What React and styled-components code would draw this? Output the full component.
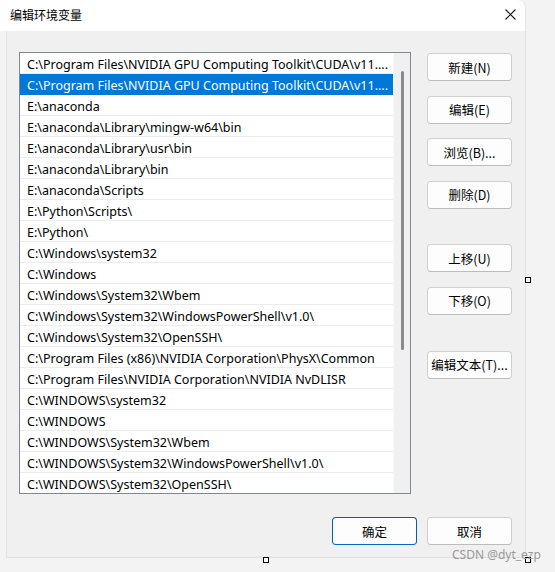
import React from 'react';
import styled, { createGlobalStyle } from 'styled-components';

const paths = [
  'C:\\Program Files\\NVIDIA GPU Computing Toolkit\\CUDA\\v11....',
  'C:\\Program Files\\NVIDIA GPU Computing Toolkit\\CUDA\\v11....',
  'E:\\anaconda',
  'E:\\anaconda\\Library\\mingw-w64\\bin',
  'E:\\anaconda\\Library\\usr\\bin',
  'E:\\anaconda\\Library\\bin',
  'E:\\anaconda\\Scripts',
  'E:\\Python\\Scripts\\',
  'E:\\Python\\',
  'C:\\Windows\\system32',
  'C:\\Windows',
  'C:\\Windows\\System32\\Wbem',
  'C:\\Windows\\System32\\WindowsPowerShell\\v1.0\\',
  'C:\\Windows\\System32\\OpenSSH\\',
  'C:\\Program Files (x86)\\NVIDIA Corporation\\PhysX\\Common',
  'C:\\Program Files\\NVIDIA Corporation\\NVIDIA NvDLISR',
  'C:\\WINDOWS\\system32',
  'C:\\WINDOWS',
  'C:\\WINDOWS\\System32\\Wbem',
  'C:\\WINDOWS\\System32\\WindowsPowerShell\\v1.0\\',
  'C:\\WINDOWS\\System32\\OpenSSH\\',
];

const sideButtons = [
  { label: '新建(N)' },
  { label: '编辑(E)' },
  { label: '浏览(B)...' },
  { label: '删除(D)' },
  { label: '上移(U)', spaced: true },
  { label: '下移(O)' },
  { label: '编辑文本(T)...', spaced: true },
];

const App = () => {
  return (
    <Page>
      <GlobalStyle />
      <Window>
        <TitleBar>
          <Title>编辑环境变量</Title>
          <CloseButton aria-label="关闭">
            <svg width="11" height="11" viewBox="0 0 11 11">
              <path d="M0.5 0.5 L10.5 10.5 M10.5 0.5 L0.5 10.5" stroke="#1a1a1a" strokeWidth="1.1" fill="none" />
            </svg>
          </CloseButton>
        </TitleBar>
        <Body>
          <Main>
            <ListBox>
              <Rows>
                {paths.map((p, i) => (
                  <Row key={i} $selected={i === 1}>
                    {p}
                  </Row>
                ))}
              </Rows>
              <ScrollTrack>
                <Thumb />
              </ScrollTrack>
            </ListBox>
            <ButtonColumn>
              {sideButtons.map((b) => (
                <Button key={b.label} $spaced={b.spaced}>
                  {b.label}
                </Button>
              ))}
            </ButtonColumn>
          </Main>
          <Footer>
            <Button $primary>确定</Button>
            <Button>取消</Button>
          </Footer>
        </Body>
      </Window>
      <Handle style={{ left: 525, top: 277 }} />
      <Handle style={{ left: 263, top: 557 }} />
      <Handle style={{ left: 525, top: 557 }} />
      <Watermark>CSDN @dyt_ezp</Watermark>
    </Page>
  );
};

export default App;

const GlobalStyle = createGlobalStyle`
  html, body {
    margin: 0;
    padding: 0;
    background: #f3f3f3;
  }
  * {
    box-sizing: border-box;
  }
`;

const Page = styled.div`
  position: relative;
  width: 555px;
  height: 572px;
  overflow: hidden;
  background: #f3f3f3;
  font-family: 'Noto Sans', 'Noto Sans CJK SC', sans-serif;
  font-size: 12px;
  color: #000;
`;

const Window = styled.div`
  width: 526px;
  display: flex;
  flex-direction: column;
`;

const TitleBar = styled.div`
  height: 31px;
  background: #ffffff;
  border-right: 1px solid #e3e3e3;
  border-top-right-radius: 8px;
  display: flex;
  align-items: center;
  justify-content: space-between;
  padding: 0 9px 0 10px;
`;

const Title = styled.div`
  font-family: 'Noto Sans CJK SC', sans-serif;
  font-size: 12px;
  line-height: 14px;
  margin-top: -1px;
`;

const CloseButton = styled.div`
  width: 11px;
  height: 11px;
  display: flex;
  margin-top: -2px;
`;

const Body = styled.div`
  margin-left: 6px;
  height: 527px;
  background: #f0f0f0;
  border-left: 1px solid #e1e1e1;
  border-right: 1px solid #e1e1e1;
  border-bottom: 1px solid #dedede;
  padding: 21px 13px 0 12px;
  display: flex;
  flex-direction: column;
`;

const Main = styled.div`
  display: flex;
  gap: 16px;
`;

const ListBox = styled.div`
  width: 392px;
  height: 442px;
  border: 1px solid #828790;
  background: #ffffff;
  display: flex;
  overflow: hidden;
`;

const Rows = styled.div`
  flex: 1;
  display: flex;
  flex-direction: column;
  overflow: hidden;
`;

const Row = styled.div`
  flex: 0 0 21px;
  height: 21px;
  padding: 3px 0 0 7px;
  line-height: 17px;
  font-size: 12.5px;
  white-space: nowrap;
  overflow: hidden;
  border-bottom: 1px solid ${(p) => (p.$selected ? '#0078d7' : '#ececec')};
  background: ${(p) => (p.$selected ? '#0078d7' : '#ffffff')};
  color: ${(p) => (p.$selected ? '#ffffff' : '#000000')};
`;

const ScrollTrack = styled.div`
  width: 17px;
  background: #f0f0f0;
  border-left: 1px solid #fafafa;
  padding: 18px 0 0 7px;
`;

const Thumb = styled.div`
  width: 3px;
  height: 279px;
  border-radius: 2px;
  background: #8a8a8a;
`;

const ButtonColumn = styled.div`
  display: flex;
  flex-direction: column;
  padding-top: 1px;
  gap: 14.6px;
`;

const Button = styled.div`
  width: 85px;
  height: 28px;
  display: flex;
  align-items: center;
  justify-content: center;
  background: #fdfdfd;
  border: 1px solid ${(p) => (p.$primary ? '#005fb8' : '#d0d0d0')};
  border-bottom-color: ${(p) => (p.$primary ? '#0067c0' : '#bcbcbc')};
  border-radius: 4px;
  font-family: 'Noto Sans CJK SC', sans-serif;
  font-size: 12.5px;
  white-space: nowrap;
  margin-top: ${(p) => (p.$spaced ? '21px' : '0')};
`;

const Footer = styled.div`
  display: flex;
  justify-content: flex-end;
  gap: 10px;
  margin-top: 23px;
`;

const Handle = styled.div`
  position: absolute;
  width: 6px;
  height: 6px;
  background: #ffffff;
  border: 1px solid #000000;
`;

const Watermark = styled.div`
  position: absolute;
  left: 452px;
  top: 546px;
  font-family: 'Noto Sans', sans-serif;
  font-size: 12px;
  color: #999999;
`;
